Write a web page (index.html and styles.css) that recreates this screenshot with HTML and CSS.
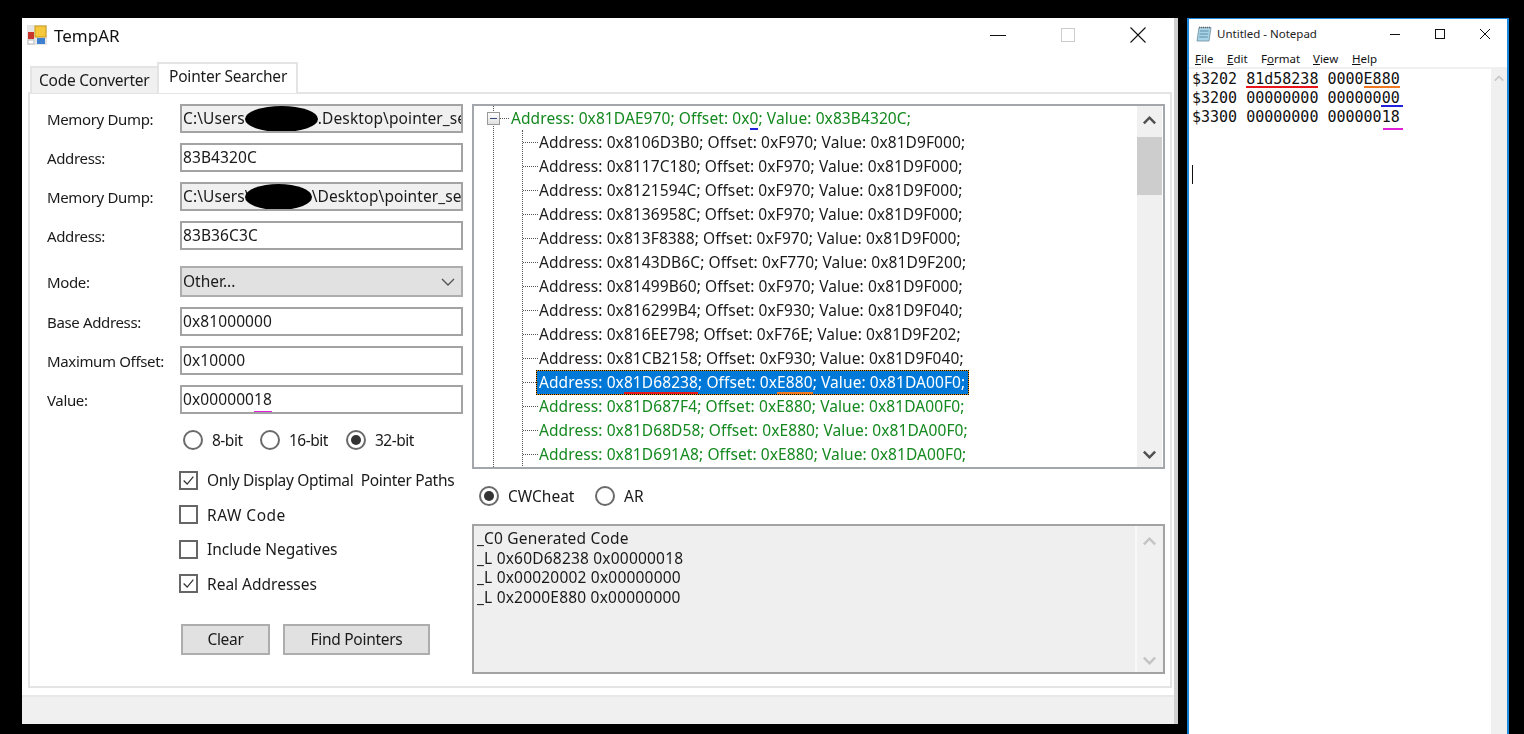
FILE: index.html
```html
<!DOCTYPE html>
<html lang="en">
<head>
<meta charset="utf-8">
<title>TempAR</title>
<link rel="stylesheet" href="styles.css">
</head>
<body>
<div class="desktop">
  <section class="app">
    <header class="titlebar">
      <svg class="app-icon" viewBox="0 0 20 20"><rect width="20" height="20" fill="#e6e6e6"/><rect x="8" y="1" width="11" height="11" fill="#f6c83c" stroke="#c99a1c"/><rect x="1" y="7" width="6" height="7" fill="#c8352a"/><rect x="10" y="13" width="8" height="6" fill="#3f7fd0"/><rect x="1" y="15" width="6" height="4" fill="#fff" stroke="#bbb"/></svg>
      <span class="app-title">TempAR</span>
      <div class="controls">
        <svg class="ctl" viewBox="0 0 16 16"><path d="M0 8.5H16" stroke="#111" stroke-width="1"/></svg>
        <svg class="ctl" viewBox="0 0 16 16"><rect x="1.5" y="1.5" width="13" height="13" fill="none" stroke="#ccc"/></svg>
        <svg class="ctl" viewBox="0 0 16 16"><path d="M0.5 0.5L15.5 15.5M15.5 0.5L0.5 15.5" stroke="#111" stroke-width="1.1"/></svg>
      </div>
    </header>
    <nav class="tabs">
      <div class="tab">Code Converter</div>
      <div class="tab active">Pointer Searcher</div>
    </nav>
    <main class="panel">
      <div class="form">
        <div class="row"><label class="lbl">Memory Dump:</label><div class="field ro">C:\Users<span class="blob blob-a"></span>.Desktop\pointer_se</div></div>
        <div class="row"><label class="lbl">Address:</label><div class="field">83B4320C</div></div>
        <div class="row"><label class="lbl">Memory Dump:</label><div class="field ro">C:\Users\<span class="blob blob-b"></span>\Desktop\pointer_se</div></div>
        <div class="row after-gap"><label class="lbl">Address:</label><div class="field">83B36C3C</div></div>
        <div class="row select-row"><label class="lbl">Mode:</label>
          <div class="field select">Other...<svg class="chev" viewBox="0 0 14 8"><path d="M1 1L7 7L13 1" fill="none" stroke="#555" stroke-width="1.4"/></svg></div></div>
        <div class="row"><label class="lbl">Base Address:</label><div class="field">0x81000000</div></div>
        <div class="row"><label class="lbl">Maximum Offset:</label><div class="field">0x10000</div></div>
        <div class="row"><label class="lbl">Value:</label><div class="field">0x000000<span class="mark magenta">18</span></div></div>

        <div class="bits">
          <span class="opt bit8"><i class="radio"></i>8-bit</span>
          <span class="opt bit16"><i class="radio"></i>16-bit</span>
          <span class="opt"><i class="radio on"></i>32-bit</span>
        </div>

        <div class="checks">
          <div class="opt tight"><i class="check on"><svg viewBox="0 0 17 17"><path d="M3 8.5L7 12.5L14 4" fill="none" stroke="#333" stroke-width="1.4"/></svg></i>Only Display Optimal&nbsp; Pointer Paths</div>
          <div class="opt loose"><i class="check"></i>RAW Code</div>
          <div class="opt"><i class="check"></i>Include Negatives</div>
          <div class="opt"><i class="check on"><svg viewBox="0 0 17 17"><path d="M3 8.5L7 12.5L14 4" fill="none" stroke="#333" stroke-width="1.4"/></svg></i>Real Addresses</div>
        </div>

        <div class="buttons">
          <button class="btn btn-clear">Clear</button>
          <button class="btn btn-find">Find Pointers</button>
        </div>
      </div>

      <div class="results">
        <div class="tree-box">
          <div class="tree">
            <div class="node root"><i class="expander"></i><span class="green">Address: 0x81DAE970; Offset: 0x<span class="mark blue">0</span>; Value: 0x83B4320C;</span></div>
            <div class="children">
              <div class="node">Address: 0x8106D3B0; Offset: 0xF970; Value: 0x81D9F000;</div>
              <div class="node">Address: 0x8117C180; Offset: 0xF970; Value: 0x81D9F000;</div>
              <div class="node">Address: 0x8121594C; Offset: 0xF970; Value: 0x81D9F000;</div>
              <div class="node">Address: 0x8136958C; Offset: 0xF970; Value: 0x81D9F000;</div>
              <div class="node">Address: 0x813F8388; Offset: 0xF970; Value: 0x81D9F000;</div>
              <div class="node">Address: 0x8143DB6C; Offset: 0xF770; Value: 0x81D9F200;</div>
              <div class="node">Address: 0x81499B60; Offset: 0xF970; Value: 0x81D9F000;</div>
              <div class="node">Address: 0x816299B4; Offset: 0xF930; Value: 0x81D9F040;</div>
              <div class="node">Address: 0x816EE798; Offset: 0xF76E; Value: 0x81D9F202;</div>
              <div class="node">Address: 0x81CB2158; Offset: 0xF930; Value: 0x81D9F040;</div>
              <div class="node"><span class="selected">Address: 0x<span class="mark red">81D68238</span>; Offset: 0x<span class="mark orange">E880</span>; Value: 0x81DA00F0;</span></div>
              <div class="node green">Address: 0x81D687F4; Offset: 0xE880; Value: 0x81DA00F0;</div>
              <div class="node green">Address: 0x81D68D58; Offset: 0xE880; Value: 0x81DA00F0;</div>
              <div class="node green">Address: 0x81D691A8; Offset: 0xE880; Value: 0x81DA00F0;</div>
            </div>
          </div>
          <div class="scroll">
            <svg class="arrow" viewBox="0 0 12 8"><path d="M1 6.5L6 1.5L11 6.5" fill="none" stroke="#505050" stroke-width="2.2"/></svg>
            <div class="thumb"></div>
            <svg class="arrow bottom" viewBox="0 0 12 8"><path d="M1 1.5L6 6.5L11 1.5" fill="none" stroke="#505050" stroke-width="2.2"/></svg>
          </div>
        </div>

        <div class="format">
          <span class="opt fmt-cw"><i class="radio on"></i>CWCheat</span>
          <span class="opt"><i class="radio"></i>AR</span>
        </div>

        <div class="output">
          <div class="code">_C0 Generated Code<br>_L 0x60D68238 0x00000018<br>_L 0x00020002 0x00000000<br>_L 0x2000E880 0x00000000</div>
          <div class="scroll">
            <svg class="arrow dim" viewBox="0 0 12 8"><path d="M1 6.5L6 1.5L11 6.5" fill="none" stroke="#c4c4c4" stroke-width="2.2"/></svg>
            <svg class="arrow dim bottom" viewBox="0 0 12 8"><path d="M1 1.5L6 6.5L11 1.5" fill="none" stroke="#c4c4c4" stroke-width="2.2"/></svg>
          </div>
        </div>
      </div>
    </main>
    <footer class="status"></footer>
  </section>

  <section class="notepad">
    <header class="np-title">
      <svg class="np-icon" viewBox="0 0 16 16"><path d="M3 1.5H15L13 15H1Z" fill="#a9d3e6" stroke="#6b8fa0" stroke-width=".8"/><path d="M4 5H12.5M3.6 8H12.2M3.2 11H11.8" stroke="#4d7f99" stroke-width=".8"/><path d="M3 1.5H15" stroke="#666" stroke-width="1.4" stroke-dasharray="1 1"/></svg>
      <span class="np-name">Untitled - Notepad</span>
      <div class="np-controls">
        <svg class="np-ctl" viewBox="0 0 10 10"><path d="M0 5.5H10" stroke="#111"/></svg>
        <svg class="np-ctl" viewBox="0 0 10 10"><rect x=".5" y=".5" width="9" height="9" fill="none" stroke="#111"/></svg>
        <svg class="np-ctl" viewBox="0 0 10 10"><path d="M0 0L10 10M10 0L0 10" stroke="#111"/></svg>
      </div>
    </header>
    <div class="np-menu">
      <span><u>F</u>ile</span><span><u>E</u>dit</span><span>F<u>o</u>rmat</span><span><u>V</u>iew</span><span><u>H</u>elp</span>
    </div>
    <div class="np-body">
      <pre class="np-text">$3202 <span class="mark red wide">81d58238</span> 0000<span class="mark orange wide">E880</span>
$3200 00000000 000000<span class="mark blue wide">00</span>
$3300 00000000 000000<span class="mark magenta low">18</span>


<span class="caret"></span></pre>
      <div class="np-scroll">
        <svg class="np-arrow" viewBox="0 0 12 8"><path d="M1 6.5L6 1.5L11 6.5" fill="none" stroke="#c8c8c8" stroke-width="2"/></svg>
      </div>
    </div>
  </section>
</div>
</body>
</html>
```
FILE: styles.css
```css
* { box-sizing: border-box; }
html, body { margin: 0; height: 100%; background: #000; overflow: hidden; }
body { font-family: "Noto Sans", "Open Sans", sans-serif; font-size: 15.5px; color: #1a1a1a; }

.desktop { display: flex; align-items: flex-start; gap: 9px; height: 734px; padding: 18px 0 0 22px; }

.app { width: 1156px; height: 706px; background: #fff; border-right: 4px solid #cfcfcf; display: flex; flex-direction: column; flex: none; filter: blur(0.35px); }
.titlebar { height: 44px; display: flex; align-items: center; padding: 0 28px 10px 5px; flex: none; }
.app-icon { width: 20px; height: 20px; margin-right: 7px; }
.app-title { font-size: 17px; color: #111; }
.controls { margin-left: auto; display: flex; gap: 54px; }
.ctl { width: 16px; height: 16px; display: block; }

.tabs { height: 31px; margin-bottom: -1px; display: flex; align-items: flex-end; padding-left: 8px; position: relative; z-index: 1; flex: none; }
.tab { height: 27px; width: 127px; padding-left: 7px; line-height: 24px; letter-spacing: -0.25px; background: #f0f0f0; border: 2px solid #e4e4e4; border-bottom: 0; border-right: 0; white-space: nowrap; }
.tab.active { height: 31px; width: 141px; padding: 0 0 0 10px; line-height: 24px; letter-spacing: -0.2px; background: #fff; border-right: 2px solid #e4e4e4; }

.panel { height: 596px; margin: 0 2px 0 6px; border: 2px solid #e4e4e4; padding: 10px 5px 0 17px; display: flex; flex: none; }

.form { width: 416px; flex: none; margin-right: 9px; }
.row { display: flex; align-items: center; height: 29px; margin-bottom: 10px; }
.row.after-gap { margin-bottom: 16px; }
.row.select-row { height: 31px; }
.lbl { width: 133px; flex: none; white-space: nowrap; font-size: 15px; letter-spacing: -0.35px; }
.field { width: 283px; height: 100%; border: 2px solid #a3a3a3; padding: 0 0 0 1px; line-height: 25px; letter-spacing: 0.1px; white-space: nowrap; overflow: hidden; background: #fff; display: flex; align-items: center; }
.field.ro { background: #f0f0f0; }
.field.select { background: #e1e1e1; border-color: #adadad; justify-content: space-between; padding-right: 6px; letter-spacing: 0; }
.chev { width: 14px; height: 8px; flex: none; }
.blob { display: block; background: #000; height: 26px; flex: none; border-radius: 50% / 50%; }
.blob-a { width: 73px; }
.blob-b { width: 67px; margin-left: -6px; }

.mark { position: relative; }
.mark::after { content: ""; position: absolute; left: 0; right: 0; bottom: -1px; height: 2px; }
.mark.red::after { background: #e8141c; }
.mark.orange::after { background: #f0781e; }
.mark.blue::after { background: #2222dd; }
.mark.magenta::after { background: #e020d8; }
.mark.wide::after { bottom: 0; height: 2.5px; }
.mark.blue.wide::after { left: -1px; right: -3px; }
.mark.low::after { bottom: -4px; left: 1px; right: -3px; height: 2.5px; }

.opt { display: flex; align-items: center; height: 20px; white-space: nowrap; }
.radio { width: 20px; height: 20px; flex: none; border: 2px solid #6a6a6a; border-radius: 50%; margin-right: 9px; background: #fff; display: block; position: relative; }
.radio.on::after { content: ""; position: absolute; inset: 3px; border-radius: 50%; background: #333; }

.bits { display: flex; margin: 16px 0 0 136px; letter-spacing: -0.5px; }
.bit8 { width: 77px; }
.bit16 { width: 86px; }

.checks { margin: 20px 0 0 132px; display: flex; flex-direction: column; gap: 14.5px; }
.tight { letter-spacing: -0.33px; }
.loose { letter-spacing: 0.5px; }
.check { width: 19px; height: 19px; flex: none; margin-right: 9px; border: 2px solid #666; background: #fff; display: block; }
.check svg { display: block; width: 15px; height: 15px; }

.buttons { display: flex; margin: 30px 0 0 134px; gap: 13px; }
.btn { height: 31px; padding: 0; font: inherit; color: inherit; letter-spacing: -0.3px; background: #e1e1e1; border: 2px solid #adadad; }
.btn-clear { width: 89px; }
.btn-find { width: 147px; }

.results { width: 693px; flex: none; }
.tree-box { height: 365px; border: 2px solid #a3a6ab; display: flex; overflow: hidden; background: #fff; }
.tree { flex: 1; position: relative; padding: 0 0 0 13px; overflow: hidden; letter-spacing: 0.09px; }
.tree::before { content: ""; position: absolute; left: 19px; top: 0; bottom: 0; border-left: 1px dotted #555; }
.node { height: 24px; line-height: 24px; white-space: nowrap; display: flex; align-items: center; position: relative; }
.root { padding-left: 24px; }
.expander { position: absolute; left: 0; top: 6px; width: 13px; height: 13px; border: 1px solid #999; background: linear-gradient(#fff, #e0e0e0); z-index: 1; }
.expander::after { content: ""; position: absolute; left: 2px; right: 2px; top: 5px; height: 1px; background: #334a7a; }
.root::before { content: ""; position: absolute; left: 13px; width: 9px; top: 12px; border-top: 1px dotted #555; }
.children { margin-left: 35px; padding-left: 15px; border-left: 1px dotted #555; height: 400px; }
.children .node { padding-left: 1px; }
.children .node::before { content: ""; position: absolute; left: -15px; width: 15px; top: 12px; border-top: 1px dotted #555; }
.green { color: #14891f; }
.selected { background: #0078d7; color: #fff; height: 23px; line-height: 22px; margin-left: -2px; padding: 0 3px 0 2px; box-shadow: 0 0 0 1px #e8920c; outline: 1px dotted #000; display: block; }

.scroll { width: 25px; flex: none; background: #f0f0f0; position: relative; }
.tree-box .scroll { margin: 0 1px 0 0; }
.arrow { position: absolute; left: 5px; top: 9.5px; width: 15px; height: 9px; }
.arrow.bottom { top: auto; bottom: 8.5px; }
.arrow.dim { top: 10.5px; }
.arrow.dim.bottom { top: auto; bottom: 7.5px; }
.thumb { position: absolute; left: 0; right: 0; top: 31px; height: 58px; background: #cdcdcd; }

.format { display: flex; margin: 17px 0 0 7px; }
.fmt-cw { width: 116px; }

.output { height: 150px; margin-top: 18px; border: 2px solid #a3a3a3; background: #efefef; display: flex; }
.code { flex: 1; padding: 3px 0 0 3px; line-height: 19.7px; letter-spacing: 0.2px; border-right: 2px solid #f8f8f8; }
.output .scroll { margin-right: 1px; }

.status { height: 29px; margin-top: 7px; background: #f0f0f0; border-top: 2px solid #e8e8e8; flex: none; }

.notepad { width: 322px; height: 720px; background: #fff; border: 1px solid #1a86dc; border-width: 1px 2px 0; display: flex; flex-direction: column; flex: none; }
.np-title { height: 31px; display: flex; align-items: center; padding: 0 0 2px 7px; flex: none; }
.np-icon { width: 16px; height: 16px; margin-right: 5px; }
.np-name { font-size: 11.5px; color: #222; }
.np-controls { margin-left: auto; display: flex; gap: 35px; padding-right: 17px; }
.np-ctl { width: 10px; height: 10px; display: block; }
.np-menu { height: 19px; display: flex; font-size: 11.5px; color: #111; padding-left: 6px; border-bottom: 2px solid #f0f0f0; align-items: center; flex: none; }
.np-menu span:nth-child(1) { width: 32px; }
.np-menu span:nth-child(2) { width: 34px; }
.np-menu span:nth-child(3) { width: 52px; }
.np-menu span:nth-child(4) { width: 39px; }
.np-body { flex: 1; display: flex; }
.np-text { flex: 1; margin: 0; padding: 1px 0 0 3px; font-family: "DejaVu Sans Mono", "Liberation Mono", monospace; font-size: 15px; line-height: 19px; color: #111; }
.caret { display: inline-block; width: 1px; height: 19px; background: #111; vertical-align: top; }
.np-scroll { width: 16px; background: #f0f0f0; position: relative; flex: none; }
.np-arrow { position: absolute; left: 3px; top: 6px; width: 10px; height: 7px; }
```
